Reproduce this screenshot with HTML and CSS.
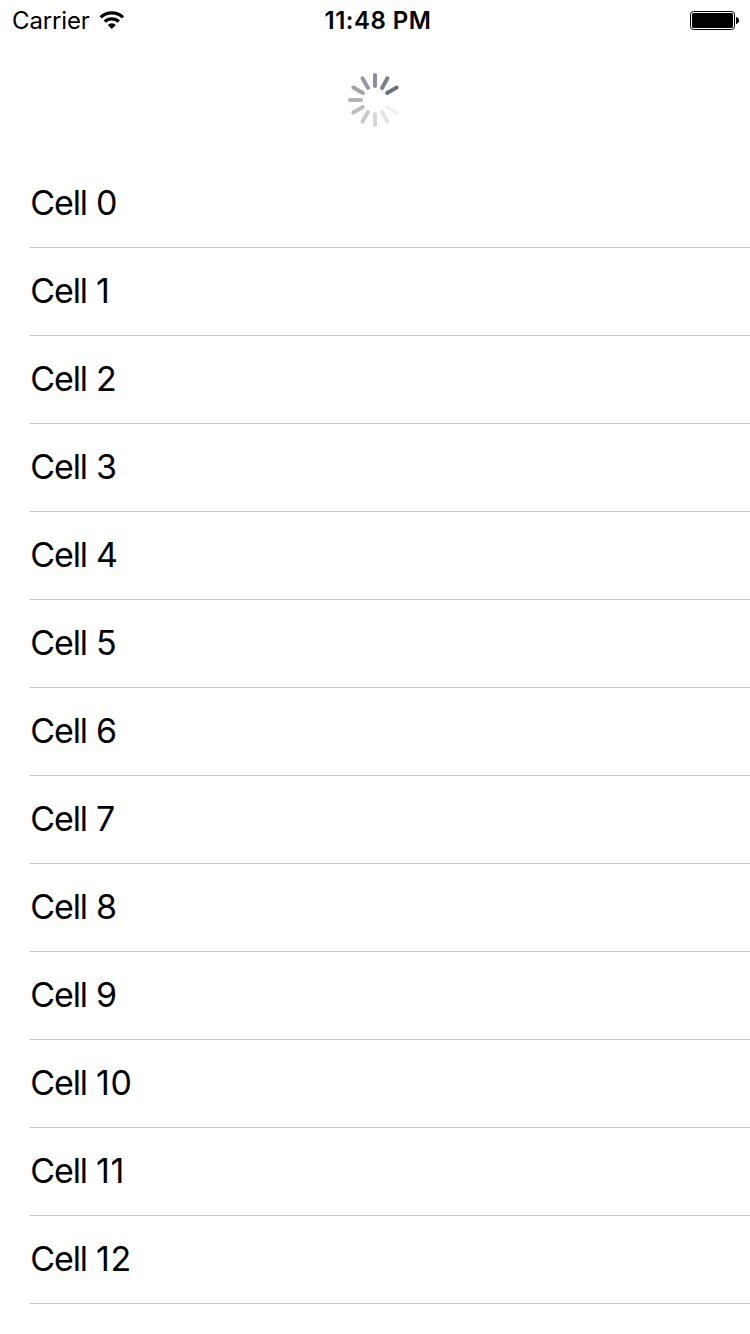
FILE: index.html
```html
<!DOCTYPE html>
<html lang="en">
<head>
<meta charset="utf-8">
<title>Cells</title>
<link rel="stylesheet" href="styles.css">
</head>
<body>
<header class="status">
  <div class="side"><span class="carrier">Carrier</span>
    <svg class="wifi" width="26" height="20" viewBox="0 0 26 20"><g fill="none" stroke="#000" stroke-width="3.2"><path d="M1.6 7.4a16.2 16.2 0 0 1 22.4 0"/><path d="M5.8 11.7a10 10 0 0 1 14 0"/></g><path d="M12.8 19l-4-4.1a5.7 5.7 0 0 1 8 0z"/></svg>
  </div>
  <div class="time">11:48 PM</div>
  <div class="side right">
    <svg class="battery" width="50" height="20" viewBox="0 0 50 20"><rect x=".5" y=".5" width="44" height="18" rx="3" fill="none" stroke="#000"/><rect x="2" y="2" width="41" height="15" rx="1.5"/><path d="M46 6q3 .8 3 3.5t-3 3.5z"/></svg>
  </div>
</header>
<div class="refresh">
  <svg class="spinner" width="56" height="56" viewBox="-28 -28 56 56"></svg>
</div>
<ul class="list"></ul>
<script src="app.js"></script>
</body>
</html>
```
FILE: styles.css
```css
body { margin: 0; background: #fff; color: #000; font-family: Inter, sans-serif; height: 1334px; overflow: hidden; }
.status { display: flex; box-sizing: border-box; height: 40px; align-items: center; padding: 1px 10px 0 12px; }
.side { flex: 1; display: flex; align-items: center; gap: 10px; }
.right { justify-content: flex-end; }
.carrier { font-size: 24px; letter-spacing: -0.15px; }
.wifi { margin: 0 0 2px -0.5px; }
.battery { margin-top: 1px; }
.time { font-size: 24px; font-weight: 600; letter-spacing: 0.5px; padding-left: 4px; }
.refresh { height: 120px; display: flex; justify-content: center; align-items: center; }
.list { list-style: none; margin: 0; padding: 0 0 0 30px; }
.cell { box-sizing: border-box; height: 88px; padding: 0 0 2px 0.3px; border-bottom: 1px solid #c8c7cc; display: flex; align-items: center; white-space: pre; font-size: 34px; }
.word { letter-spacing: -1.15px; word-spacing: 0.8px; }
.number { letter-spacing: 0.5px; }
```
FILE: app.js
```js
const list = document.querySelector('.list');
for (let i = 0; i < 13; i++) {
  const li = document.createElement('li');
  li.className = 'cell';
  li.innerHTML = `<span class="word">Cell </span><span class="number">${i}</span>`;
  list.append(li);
}
const spinner = document.querySelector('.spinner');
const shades = ['#6c7380', '#7b818c', '#8a8f98', '#9499a2', '#a0a4aa', '#afb2b8', '#bbbdc2', '#c9cbcf', '#d7d8db', '#e5e5e7', '#f2f2f2'];
shades.forEach((shade, i) => {
  const line = document.createElementNS('http://www.w3.org/2000/svg', 'line');
  line.setAttribute('y1', -14);
  line.setAttribute('y2', -25);
  line.setAttribute('stroke', shade);
  line.setAttribute('stroke-width', 4);
  line.setAttribute('stroke-linecap', 'round');
  line.setAttribute('transform', `rotate(${60 - i * 30})`);
  spinner.append(line);
});
```
